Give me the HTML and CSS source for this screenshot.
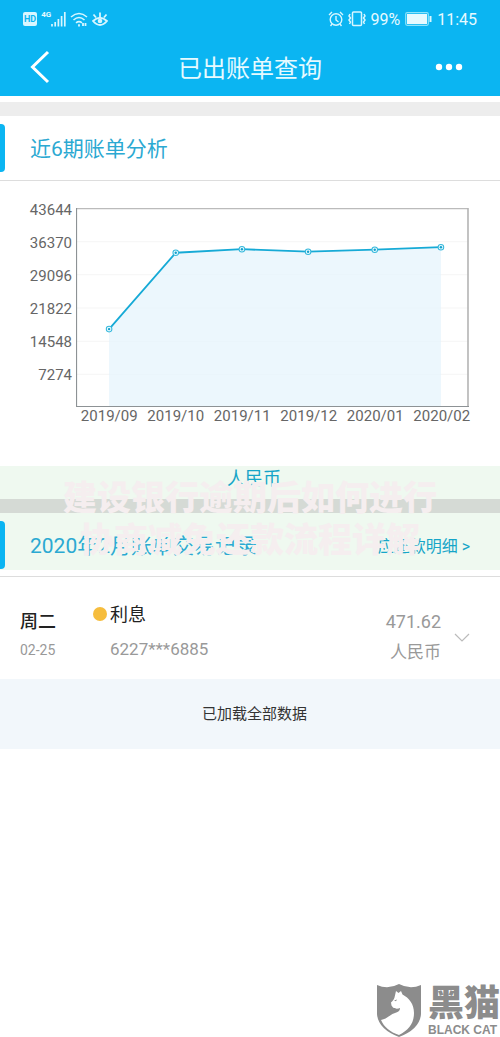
FILE: index.html
```html
<!DOCTYPE html>
<html lang="zh-CN">
<head>
  <meta charset="UTF-8">
  <meta name="viewport" content="width=device-width, initial-scale=1.0">
  <title>已出账单查询</title>
  <link rel="stylesheet" href="styles.css">
</head>
<body>
  <header class="top">
    <div class="status-bar">
      <div class="status-left">
        <span class="hd">HD</span>
        <span class="net">4G</span>
        <svg class="signal" width="15" height="15" viewBox="0 0 15 15"><path d="M1 12v2.500M4.200 10v4.500M7.400 7v7.500M10.600 4v10.500M13.800 0v14.500" stroke="#d8f6ff" stroke-width="1.700"/></svg>
        <svg width="18" height="15" viewBox="0 0 18 15" fill="none" stroke="#d8f6ff" stroke-width="1.600"><path d="M1 5Q9-2 17 5M3.500 8Q9 3 14.500 8M6 10.800Q9 8.500 12 10.800"/><path d="M9 12.200v2.300M13 11v3M15.500 11v3" stroke-width="1.800"/></svg>
        <svg width="16" height="15" viewBox="0 0 16 15" fill="none" stroke="#d8f6ff" stroke-width="1.800"><path d="M1 9Q8 2.500 15 9Q8 17 1 9zM8 5V.5M4 5.500L1.500 2.500M12 5.500l2.500-3"/><circle cx="8" cy="9" r="2.300" fill="#d8f6ff" stroke="none"/></svg>
      </div>
      <div class="status-right">
        <svg width="16" height="16" viewBox="0 0 16 16" fill="none" stroke="#d8f6ff" stroke-width="1.400"><circle cx="8" cy="8.500" r="5.800"/><path d="M8 5v4l2.500 2M1 4l3-3M15 4l-3-3M4 13l-1.500 2M12 13l1.500 2"/></svg>
        <svg width="20" height="16" viewBox="0 0 20 16" fill="none" stroke="#d8f6ff" stroke-width="1.500"><rect x="5.500" y="1" width="9" height="13.500" rx="1"/><path d="M3 3L2 5l1.500 2L2 9l1.500 2L2.500 13M17 3l1 2-1.500 2L18 9l-1.500 2 1 2"/></svg>
        <span>99%</span>
        <svg class="battery" width="27" height="14" viewBox="0 0 27 14"><rect x=".7" y=".7" width="22.600" height="12.600" rx="1.500" fill="none" stroke="#8be3fb" stroke-width="1.200"/><rect x="2" y="2" width="20" height="10" fill="#e6faff"/><path d="M25.500 4v6" stroke="#d8f6ff" stroke-width="2"/></svg>
        <span>11:45</span>
      </div>
    </div>
    <nav class="nav-bar">
      <button class="icon-button" aria-label="返回"><svg width="20" height="34" viewBox="0 0 20 34"><path d="M18 2L2.500 17L18 32" fill="none" stroke="#fff" stroke-width="3"/></svg></button>
      <h1>已出账单查询</h1>
      <button class="icon-button more" aria-label="更多"><svg width="28" height="8" viewBox="0 0 28 8" fill="#fff"><circle cx="4" cy="4" r="3.200"/><circle cx="14" cy="4" r="3.200"/><circle cx="24" cy="4" r="3.200"/></svg></button>
    </nav>
  </header>

  <main>
    <section class="analysis">
      <div class="section-head">
        <h2>近6期账单分析</h2>
      </div>
      <div class="chart">
        <div class="y-axis">
          <span>43644</span><span>36370</span><span>29096</span><span>21822</span><span>14548</span><span>7274</span>
        </div>
        <div class="plot">
          <svg class="plot-area" viewBox="0 0 392 198" preserveAspectRatio="none">
            <path d="M0 33.500h392M0 66.500h392M0 99.500h392M0 132.500h392M0 165.500h392" stroke="#f5f5f5"/>
            <path d="M33 120.500L99.500 44.500L165.500 41L231.500 43.500L298 41.500L364 39V198H33z" fill="#e4f3fc" fill-opacity=".7"/>
            <path d="M33 120.500L99.500 44.500L165.500 41L231.500 43.500L298 41.500L364 39" fill="none" stroke="#16aad6" stroke-width="1.800"/>
            <g fill="#e8fbff" stroke="#35b8dc">
              <circle cx="33" cy="120.500" r="2.800"/><circle cx="99.500" cy="44.500" r="2.800"/><circle cx="165.500" cy="41" r="2.800"/><circle cx="231.500" cy="43.500" r="2.800"/><circle cx="298" cy="41.500" r="2.800"/><circle cx="364" cy="39" r="2.800"/>
            </g>
            <g fill="#16a0cc">
              <circle cx="33" cy="120.500" r="1.200"/><circle cx="99.500" cy="44.500" r="1.200"/><circle cx="165.500" cy="41" r="1.200"/><circle cx="231.500" cy="43.500" r="1.200"/><circle cx="298" cy="41.500" r="1.200"/><circle cx="364" cy="39" r="1.200"/>
            </g>
            <path d="M0 .5h391" stroke="#bbb" stroke-width="1.400"/>
            <path d="M391 0v198" stroke="#b4b4b4" stroke-width="1.600"/>
            <path d="M.5 0v197.500H392" fill="none" stroke="#8d9295" stroke-width="1.200"/>
          </svg>
          <div class="x-axis">
            <span>2019/09</span><span>2019/10</span><span>2019/11</span><span>2019/12</span><span>2020/01</span><span>2020/02</span>
          </div>
        </div>
      </div>
    </section>

    <div class="overlaid">
      <div class="currency">人民币</div>
      <div class="section-head records-head">
        <h2>2020年2月账单交易记录</h2>
        <a href="#">应还款明细 &gt;</a>
      </div>
      <div class="banner">建设银行逾期后如何进行<br>协商减免还款流程详解</div>
    </div>

    <article class="record">
      <div class="day"><strong>周二</strong><span>02-25</span></div>
      <div class="detail"><strong>利息</strong><span>6227***6885</span></div>
      <div class="amount"><span>471.62</span><span class="unit">人民币</span></div>
      <button class="icon-button expand" aria-label="展开"><svg width="16" height="9" viewBox="0 0 16 9"><path d="M1 1l7 7 7-7" fill="none" stroke="#bbb" stroke-width="1.200"/></svg></button>
    </article>
    <p class="loaded">已加载全部数据</p>
  </main>

  <footer class="brand">
    <svg width="46" height="53" viewBox="0 0 46 53">
      <path d="M1 1Q12 6 23 0Q34 6 45 1V30Q44 45 23 53Q2 45 1 30z" fill="#8c8c8c"/>
      <path d="M20 7l2.500 2L25 7l1.500 3.500C33 14 38 20 38 29c0 10-5 17-15 22C14 48 8 43 5 36c6-1 8-5 14-7 4-1 5-3 5-5-2 1-5 1-7-.5l-1.500-2-.5-3c2-2 3-3 3.500-5z" fill="#fff"/>
      <path d="M18 16.500l3-1-1 1.800z" fill="#8c8c8c"/>
    </svg>
    <div class="brand-name"><strong>黑猫</strong><span>BLACK CAT</span></div>
  </footer>
</body>
</html>
```
FILE: styles.css
```css
* {
  box-sizing: border-box;
}

body {
  margin: 0;
  min-height: 100vh;
  display: flex;
  flex-direction: column;
  background: #fff;
  color: #333;
  font-family: Roboto, "Noto Sans CJK SC", sans-serif;
}

h1, h2, p {
  margin: 0;
  font-weight: 400;
}

a {
  text-decoration: none;
}

.top {
  background: #0bb5f2;
  color: #e6faff;
}

.status-bar {
  display: flex;
  justify-content: space-between;
  height: 38px;
  padding: 0 23px;
}

.status-left, .status-right {
  display: flex;
  align-items: center;
  gap: 4px;
}

.status-right {
  gap: 3px;
  font-size: 16px;
}

.battery {
  margin: 0 2px;
}

.hd {
  padding: 0 1px;
  border-radius: 2px;
  background: #d8f6ff;
  color: #0bb5f2;
  font-size: 9px;
  font-weight: 700;
  line-height: 14px;
}

.net {
  align-self: flex-start;
  margin-top: 10px;
  font-size: 8px;
  font-weight: 700;
  line-height: 9px;
}

.signal {
  margin-left: -4px;
}

.nav-bar {
  display: flex;
  align-items: center;
  justify-content: space-between;
  height: 58px;
  padding: 0 30px;
}

.nav-bar h1 {
  padding-top: 3px;
  font-size: 24px;
  line-height: 32px;
}

.icon-button {
  display: flex;
  padding: 0;
  border: 0;
  background: none;
  cursor: pointer;
}

.nav-bar .icon-button {
  width: 40px;
}

.nav-bar .more {
  padding-left: 5px;
}

.analysis {
  margin-top: 6px;
  border-top: 14px solid #ededed;
}

.section-head {
  display: flex;
  align-items: center;
  height: 65px;
  padding-right: 30px;
  border-bottom: 1px solid #ddd;
}

.section-head::before {
  content: "";
  width: 5px;
  height: 48px;
  border-radius: 0 4px 4px 0;
  background: #0bb5f2;
}

.section-head h2 {
  flex: 1;
  padding-left: 25px;
  color: #2ba9d2;
  font-size: 21px;
  line-height: 32px;
  padding-top: 2px;
}

.section-head a {
  color: #16a5c8;
  font-size: 16px;
}

.chart {
  display: flex;
  gap: 4px;
  padding: 27px 31px 0 29px;
  color: #666;
  font-size: 15px;
}

.y-axis {
  width: 43px;
  display: flex;
  flex-direction: column;
  align-items: flex-end;
  margin-top: -14px;
}

.y-axis span {
  line-height: 33px;
}

.plot {
  flex: 1;
}

.plot-area {
  display: block;
  width: 100%;
  height: 199px;
}

.x-axis {
  display: grid;
  grid-template-columns: repeat(6, 1fr);
  margin-right: -6px;
  text-align: center;
  line-height: 18px;
}

.overlaid {
  position: relative;
  margin-top: 41px;
}

.currency {
  height: 47px;
  padding-left: 8px;
  border-bottom: 14px solid #d5dad5;
  background: #eff9f0;
  color: #16a5c8;
  font-size: 18px;
  line-height: 26px;
  text-align: center;
}

.records-head {
  height: 64px;
  background: linear-gradient(#eff9f0 57px, #fff 57px);
}

.banner {
  position: absolute;
  top: 11px;
  left: 0;
  width: 100%;
  color: #f5eeef;
  font-size: 34px;
  font-weight: 900;
  line-height: 42px;
  text-align: center;
  pointer-events: none;
}

.record {
  display: flex;
  align-items: center;
  height: 102px;
  padding: 0 30px 0 20px;
  color: #999;
}

.record strong {
  color: #222;
  font-size: 18px;
  font-weight: 400;
}

.day, .detail, .amount {
  display: flex;
  flex-direction: column;
}

.day {
  width: 73px;
  padding-top: 16px;
  font-size: 14px;
  line-height: 28px;
}

.record .day strong {
  font-weight: 500;
}

.detail {
  flex: 1;
  padding-top: 7px;
  padding-left: 17px;
  font-size: 17px;
  line-height: 34px;
}

.detail strong::before {
  content: "";
  display: inline-block;
  width: 14px;
  height: 14px;
  margin-left: -17px;
  margin-right: 3px;
  border-radius: 50%;
  background: #f6bd3d;
}

.amount {
  align-items: flex-end;
  padding-top: 18px;
  font-size: 18px;
  line-height: 30px;
}

.unit {
  font-size: 17px;
}

.expand {
  margin-left: 13px;
  padding-top: 18px;
}

.loaded {
  background: #f2f7fb;
  color: #333;
  font-size: 15px;
  line-height: 70px;
  padding-left: 9px;
  text-align: center;
}

.brand {
  display: flex;
  align-items: center;
  gap: 6px;
  margin-top: auto;
  margin-left: auto;
  color: #8c8c8c;
}

.brand-name {
  display: flex;
  flex-direction: column;
}

.brand-name strong {
  font-size: 36px;
  font-weight: 900;
  line-height: 38px;
}

.brand-name span {
  font-family: "Liberation Sans", sans-serif;
  font-size: 12px;
  font-weight: 700;
  line-height: 14px;
}
```
